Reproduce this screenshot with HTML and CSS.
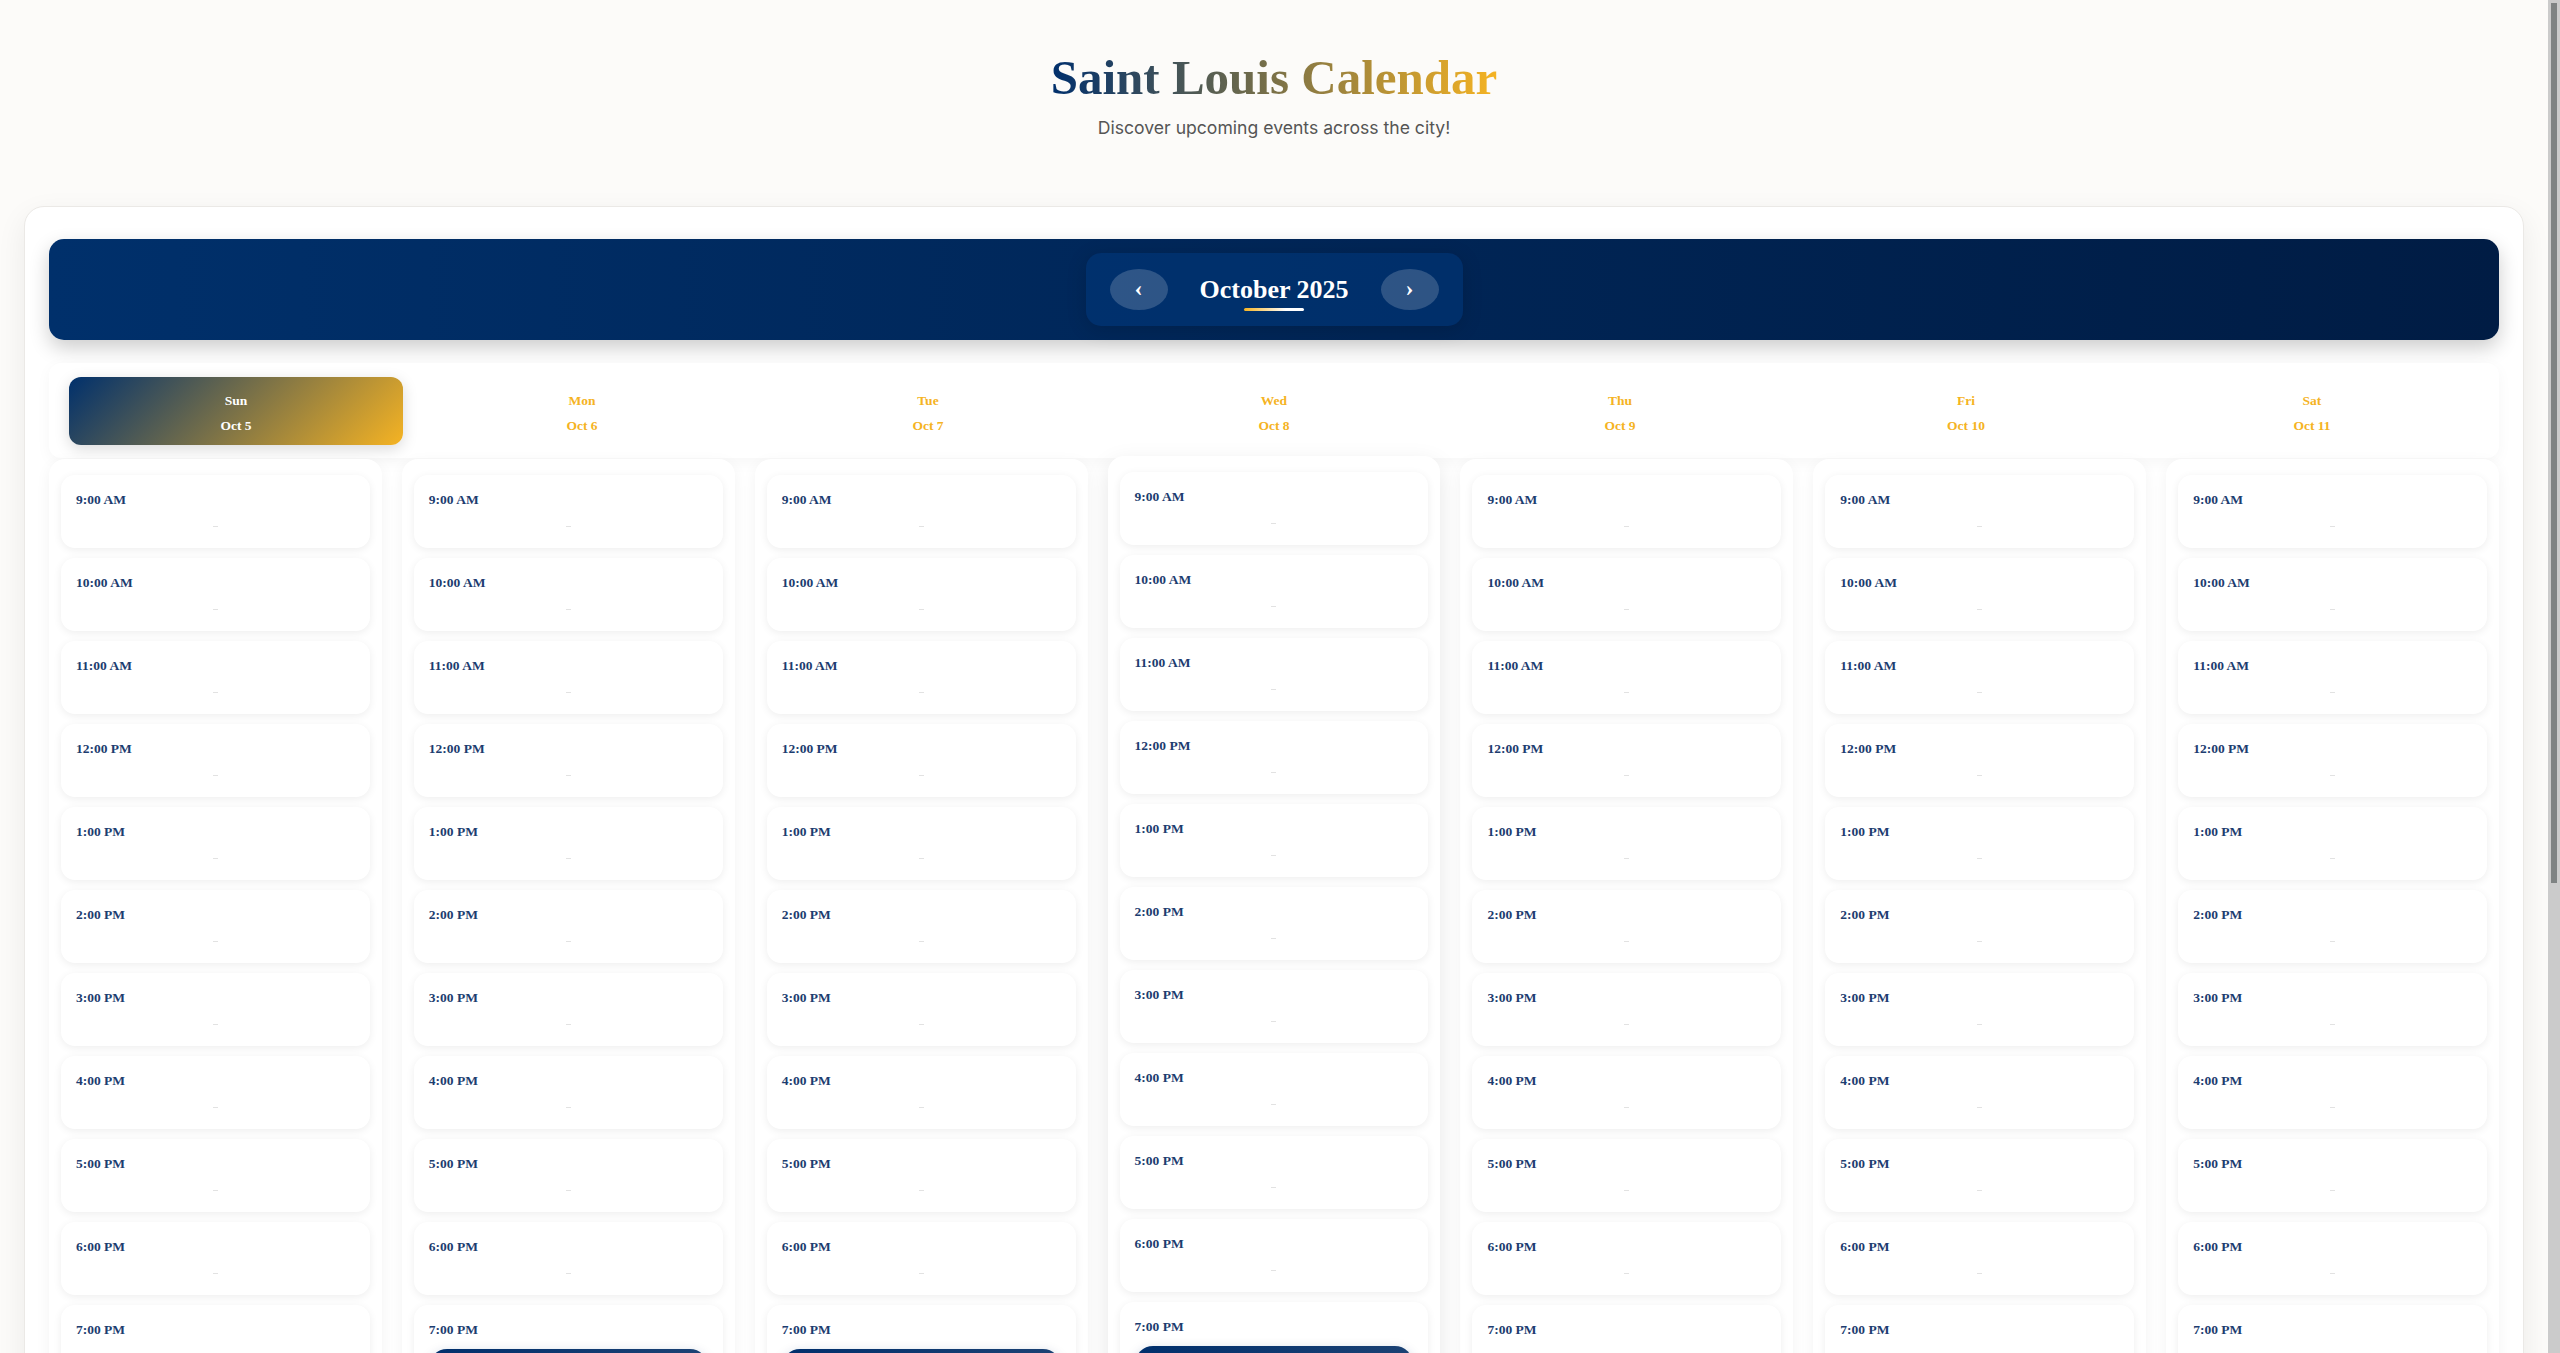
FILE: index.html
```html
<!DOCTYPE html>
<html lang="en">
<head>
<meta charset="utf-8">
<title>Saint Louis Calendar</title>
<link rel="stylesheet" href="styles.css">
</head>
<body>
<header class="page-header">
  <h1 class="page-title">Saint Louis Calendar</h1>
  <p class="page-subtitle">Discover upcoming events across the city!</p>
</header>
<main class="container">
  <section class="calendar-card">
    <div class="month-bar">
      <div class="month-nav">
        <button class="nav-btn" type="button" aria-label="Previous month">‹</button>
        <h2 class="month-title">October 2025</h2>
        <button class="nav-btn" type="button" aria-label="Next month">›</button>
      </div>
    </div>

    <div class="day-header-row">
      <div class="day-head active"><span>Sun</span><span>Oct 5</span></div>
      <div class="day-head"><span>Mon</span><span>Oct 6</span></div>
      <div class="day-head"><span>Tue</span><span>Oct 7</span></div>
      <div class="day-head"><span>Wed</span><span>Oct 8</span></div>
      <div class="day-head"><span>Thu</span><span>Oct 9</span></div>
      <div class="day-head"><span>Fri</span><span>Oct 10</span></div>
      <div class="day-head"><span>Sat</span><span>Oct 11</span></div>
    </div>

    <div class="week-grid">
      <!-- Sunday -->
      <div class="day-col">
        <div class="slot"><div class="slot-time">9:00 AM</div><div class="slot-events"><i class="empty-mark"></i></div></div>
        <div class="slot"><div class="slot-time">10:00 AM</div><div class="slot-events"><i class="empty-mark"></i></div></div>
        <div class="slot"><div class="slot-time">11:00 AM</div><div class="slot-events"><i class="empty-mark"></i></div></div>
        <div class="slot"><div class="slot-time">12:00 PM</div><div class="slot-events"><i class="empty-mark"></i></div></div>
        <div class="slot"><div class="slot-time">1:00 PM</div><div class="slot-events"><i class="empty-mark"></i></div></div>
        <div class="slot"><div class="slot-time">2:00 PM</div><div class="slot-events"><i class="empty-mark"></i></div></div>
        <div class="slot"><div class="slot-time">3:00 PM</div><div class="slot-events"><i class="empty-mark"></i></div></div>
        <div class="slot"><div class="slot-time">4:00 PM</div><div class="slot-events"><i class="empty-mark"></i></div></div>
        <div class="slot"><div class="slot-time">5:00 PM</div><div class="slot-events"><i class="empty-mark"></i></div></div>
        <div class="slot"><div class="slot-time">6:00 PM</div><div class="slot-events"><i class="empty-mark"></i></div></div>
        <div class="slot"><div class="slot-time">7:00 PM</div><div class="slot-events"><i class="empty-mark"></i></div></div>
        <div class="slot"><div class="slot-time">8:00 PM</div><div class="slot-events"><i class="empty-mark"></i></div></div>
        <div class="slot"><div class="slot-time">9:00 PM</div><div class="slot-events"><i class="empty-mark"></i></div></div>
        <div class="slot"><div class="slot-time">10:00 PM</div><div class="slot-events"><i class="empty-mark"></i></div></div>
        <div class="slot"><div class="slot-time">11:00 PM</div><div class="slot-events"><i class="empty-mark"></i></div></div>
      </div>
      <!-- Monday -->
      <div class="day-col">
        <div class="slot"><div class="slot-time">9:00 AM</div><div class="slot-events"><i class="empty-mark"></i></div></div>
        <div class="slot"><div class="slot-time">10:00 AM</div><div class="slot-events"><i class="empty-mark"></i></div></div>
        <div class="slot"><div class="slot-time">11:00 AM</div><div class="slot-events"><i class="empty-mark"></i></div></div>
        <div class="slot"><div class="slot-time">12:00 PM</div><div class="slot-events"><i class="empty-mark"></i></div></div>
        <div class="slot"><div class="slot-time">1:00 PM</div><div class="slot-events"><i class="empty-mark"></i></div></div>
        <div class="slot"><div class="slot-time">2:00 PM</div><div class="slot-events"><i class="empty-mark"></i></div></div>
        <div class="slot"><div class="slot-time">3:00 PM</div><div class="slot-events"><i class="empty-mark"></i></div></div>
        <div class="slot"><div class="slot-time">4:00 PM</div><div class="slot-events"><i class="empty-mark"></i></div></div>
        <div class="slot"><div class="slot-time">5:00 PM</div><div class="slot-events"><i class="empty-mark"></i></div></div>
        <div class="slot"><div class="slot-time">6:00 PM</div><div class="slot-events"><i class="empty-mark"></i></div></div>
        <div class="slot"><div class="slot-time">7:00 PM</div><div class="slot-events">
          <article class="event">
            <div class="event-title">Jazz Night at the Bistro</div>
            <div class="event-meta">7:00 PM – 10:00 PM</div>
            <div class="event-meta">Jazz at the Bistro, Grand Center</div>
            <p class="event-desc">An evening of live jazz in the heart of the Grand Center Arts District, featuring local and touring musicians.</p>
            <span class="event-link">View details</span>
          </article>
        </div></div>
        <div class="slot"><div class="slot-time">8:00 PM</div><div class="slot-events"><i class="empty-mark"></i></div></div>
        <div class="slot"><div class="slot-time">9:00 PM</div><div class="slot-events"><i class="empty-mark"></i></div></div>
        <div class="slot"><div class="slot-time">10:00 PM</div><div class="slot-events"><i class="empty-mark"></i></div></div>
        <div class="slot"><div class="slot-time">11:00 PM</div><div class="slot-events"><i class="empty-mark"></i></div></div>
      </div>
      <!-- Tuesday -->
      <div class="day-col">
        <div class="slot"><div class="slot-time">9:00 AM</div><div class="slot-events"><i class="empty-mark"></i></div></div>
        <div class="slot"><div class="slot-time">10:00 AM</div><div class="slot-events"><i class="empty-mark"></i></div></div>
        <div class="slot"><div class="slot-time">11:00 AM</div><div class="slot-events"><i class="empty-mark"></i></div></div>
        <div class="slot"><div class="slot-time">12:00 PM</div><div class="slot-events"><i class="empty-mark"></i></div></div>
        <div class="slot"><div class="slot-time">1:00 PM</div><div class="slot-events"><i class="empty-mark"></i></div></div>
        <div class="slot"><div class="slot-time">2:00 PM</div><div class="slot-events"><i class="empty-mark"></i></div></div>
        <div class="slot"><div class="slot-time">3:00 PM</div><div class="slot-events"><i class="empty-mark"></i></div></div>
        <div class="slot"><div class="slot-time">4:00 PM</div><div class="slot-events"><i class="empty-mark"></i></div></div>
        <div class="slot"><div class="slot-time">5:00 PM</div><div class="slot-events"><i class="empty-mark"></i></div></div>
        <div class="slot"><div class="slot-time">6:00 PM</div><div class="slot-events"><i class="empty-mark"></i></div></div>
        <div class="slot"><div class="slot-time">7:00 PM</div><div class="slot-events">
          <article class="event">
            <div class="event-title">Trivia Night</div>
            <div class="event-meta">7:00 PM – 9:00 PM</div>
            <div class="event-meta">Schlafly Tap Room, Downtown West</div>
            <p class="event-desc">Grab a team and test your knowledge of St. Louis history, sports and pop culture. Prizes for the top three teams.</p>
            <span class="event-link">View details</span>
          </article>
        </div></div>
        <div class="slot"><div class="slot-time">8:00 PM</div><div class="slot-events"><i class="empty-mark"></i></div></div>
        <div class="slot"><div class="slot-time">9:00 PM</div><div class="slot-events"><i class="empty-mark"></i></div></div>
        <div class="slot"><div class="slot-time">10:00 PM</div><div class="slot-events"><i class="empty-mark"></i></div></div>
        <div class="slot"><div class="slot-time">11:00 PM</div><div class="slot-events"><i class="empty-mark"></i></div></div>
      </div>
      <!-- Wednesday -->
      <div class="day-col lifted">
        <div class="slot"><div class="slot-time">9:00 AM</div><div class="slot-events"><i class="empty-mark"></i></div></div>
        <div class="slot"><div class="slot-time">10:00 AM</div><div class="slot-events"><i class="empty-mark"></i></div></div>
        <div class="slot"><div class="slot-time">11:00 AM</div><div class="slot-events"><i class="empty-mark"></i></div></div>
        <div class="slot"><div class="slot-time">12:00 PM</div><div class="slot-events"><i class="empty-mark"></i></div></div>
        <div class="slot"><div class="slot-time">1:00 PM</div><div class="slot-events"><i class="empty-mark"></i></div></div>
        <div class="slot"><div class="slot-time">2:00 PM</div><div class="slot-events"><i class="empty-mark"></i></div></div>
        <div class="slot"><div class="slot-time">3:00 PM</div><div class="slot-events"><i class="empty-mark"></i></div></div>
        <div class="slot"><div class="slot-time">4:00 PM</div><div class="slot-events"><i class="empty-mark"></i></div></div>
        <div class="slot"><div class="slot-time">5:00 PM</div><div class="slot-events"><i class="empty-mark"></i></div></div>
        <div class="slot"><div class="slot-time">6:00 PM</div><div class="slot-events"><i class="empty-mark"></i></div></div>
        <div class="slot"><div class="slot-time">7:00 PM</div><div class="slot-events">
          <article class="event">
            <div class="event-title">Blues on the Riverfront</div>
            <div class="event-meta">7:00 PM – 11:00 PM</div>
            <div class="event-meta">BB's Jazz, Blues &amp; Soups</div>
            <p class="event-desc">Live blues from some of the city's favorite bands, just steps from the Gateway Arch and the Mississippi riverfront.</p>
            <span class="event-link">View details</span>
          </article>
        </div></div>
        <div class="slot"><div class="slot-time">8:00 PM</div><div class="slot-events"><i class="empty-mark"></i></div></div>
        <div class="slot"><div class="slot-time">9:00 PM</div><div class="slot-events"><i class="empty-mark"></i></div></div>
        <div class="slot"><div class="slot-time">10:00 PM</div><div class="slot-events"><i class="empty-mark"></i></div></div>
        <div class="slot"><div class="slot-time">11:00 PM</div><div class="slot-events"><i class="empty-mark"></i></div></div>
      </div>
      <!-- Thursday -->
      <div class="day-col">
        <div class="slot"><div class="slot-time">9:00 AM</div><div class="slot-events"><i class="empty-mark"></i></div></div>
        <div class="slot"><div class="slot-time">10:00 AM</div><div class="slot-events"><i class="empty-mark"></i></div></div>
        <div class="slot"><div class="slot-time">11:00 AM</div><div class="slot-events"><i class="empty-mark"></i></div></div>
        <div class="slot"><div class="slot-time">12:00 PM</div><div class="slot-events"><i class="empty-mark"></i></div></div>
        <div class="slot"><div class="slot-time">1:00 PM</div><div class="slot-events"><i class="empty-mark"></i></div></div>
        <div class="slot"><div class="slot-time">2:00 PM</div><div class="slot-events"><i class="empty-mark"></i></div></div>
        <div class="slot"><div class="slot-time">3:00 PM</div><div class="slot-events"><i class="empty-mark"></i></div></div>
        <div class="slot"><div class="slot-time">4:00 PM</div><div class="slot-events"><i class="empty-mark"></i></div></div>
        <div class="slot"><div class="slot-time">5:00 PM</div><div class="slot-events"><i class="empty-mark"></i></div></div>
        <div class="slot"><div class="slot-time">6:00 PM</div><div class="slot-events"><i class="empty-mark"></i></div></div>
        <div class="slot"><div class="slot-time">7:00 PM</div><div class="slot-events"><i class="empty-mark"></i></div></div>
        <div class="slot"><div class="slot-time">8:00 PM</div><div class="slot-events"><i class="empty-mark"></i></div></div>
        <div class="slot"><div class="slot-time">9:00 PM</div><div class="slot-events"><i class="empty-mark"></i></div></div>
        <div class="slot"><div class="slot-time">10:00 PM</div><div class="slot-events"><i class="empty-mark"></i></div></div>
        <div class="slot"><div class="slot-time">11:00 PM</div><div class="slot-events"><i class="empty-mark"></i></div></div>
      </div>
      <!-- Friday -->
      <div class="day-col">
        <div class="slot"><div class="slot-time">9:00 AM</div><div class="slot-events"><i class="empty-mark"></i></div></div>
        <div class="slot"><div class="slot-time">10:00 AM</div><div class="slot-events"><i class="empty-mark"></i></div></div>
        <div class="slot"><div class="slot-time">11:00 AM</div><div class="slot-events"><i class="empty-mark"></i></div></div>
        <div class="slot"><div class="slot-time">12:00 PM</div><div class="slot-events"><i class="empty-mark"></i></div></div>
        <div class="slot"><div class="slot-time">1:00 PM</div><div class="slot-events"><i class="empty-mark"></i></div></div>
        <div class="slot"><div class="slot-time">2:00 PM</div><div class="slot-events"><i class="empty-mark"></i></div></div>
        <div class="slot"><div class="slot-time">3:00 PM</div><div class="slot-events"><i class="empty-mark"></i></div></div>
        <div class="slot"><div class="slot-time">4:00 PM</div><div class="slot-events"><i class="empty-mark"></i></div></div>
        <div class="slot"><div class="slot-time">5:00 PM</div><div class="slot-events"><i class="empty-mark"></i></div></div>
        <div class="slot"><div class="slot-time">6:00 PM</div><div class="slot-events"><i class="empty-mark"></i></div></div>
        <div class="slot"><div class="slot-time">7:00 PM</div><div class="slot-events"><i class="empty-mark"></i></div></div>
        <div class="slot"><div class="slot-time">8:00 PM</div><div class="slot-events"><i class="empty-mark"></i></div></div>
        <div class="slot"><div class="slot-time">9:00 PM</div><div class="slot-events"><i class="empty-mark"></i></div></div>
        <div class="slot"><div class="slot-time">10:00 PM</div><div class="slot-events"><i class="empty-mark"></i></div></div>
        <div class="slot"><div class="slot-time">11:00 PM</div><div class="slot-events"><i class="empty-mark"></i></div></div>
      </div>
      <!-- Saturday -->
      <div class="day-col">
        <div class="slot"><div class="slot-time">9:00 AM</div><div class="slot-events"><i class="empty-mark"></i></div></div>
        <div class="slot"><div class="slot-time">10:00 AM</div><div class="slot-events"><i class="empty-mark"></i></div></div>
        <div class="slot"><div class="slot-time">11:00 AM</div><div class="slot-events"><i class="empty-mark"></i></div></div>
        <div class="slot"><div class="slot-time">12:00 PM</div><div class="slot-events"><i class="empty-mark"></i></div></div>
        <div class="slot"><div class="slot-time">1:00 PM</div><div class="slot-events"><i class="empty-mark"></i></div></div>
        <div class="slot"><div class="slot-time">2:00 PM</div><div class="slot-events"><i class="empty-mark"></i></div></div>
        <div class="slot"><div class="slot-time">3:00 PM</div><div class="slot-events"><i class="empty-mark"></i></div></div>
        <div class="slot"><div class="slot-time">4:00 PM</div><div class="slot-events"><i class="empty-mark"></i></div></div>
        <div class="slot"><div class="slot-time">5:00 PM</div><div class="slot-events"><i class="empty-mark"></i></div></div>
        <div class="slot"><div class="slot-time">6:00 PM</div><div class="slot-events"><i class="empty-mark"></i></div></div>
        <div class="slot"><div class="slot-time">7:00 PM</div><div class="slot-events"><i class="empty-mark"></i></div></div>
        <div class="slot"><div class="slot-time">8:00 PM</div><div class="slot-events"><i class="empty-mark"></i></div></div>
        <div class="slot"><div class="slot-time">9:00 PM</div><div class="slot-events"><i class="empty-mark"></i></div></div>
        <div class="slot"><div class="slot-time">10:00 PM</div><div class="slot-events"><i class="empty-mark"></i></div></div>
        <div class="slot"><div class="slot-time">11:00 PM</div><div class="slot-events"><i class="empty-mark"></i></div></div>
      </div>
    </div>
  </section>
</main>
</body>
</html>
```

FILE: styles.css
```css
* { box-sizing: border-box; }

/* The page reserves a 12px scrollbar gutter on the right, as in the reference. */
html {
  background-color: #fcfbf9;
  background-image:
    linear-gradient(#7f8383, #7f8383),
    linear-gradient(#cbcbcb, #cbcbcb);
  background-size: 6px 880px, 12px 100%;
  background-position: right 3px top 3px, right top;
  background-repeat: no-repeat;
}

body {
  margin: 0 12px 0 0;
  font-family: "Inter", "Liberation Sans", sans-serif;
  color: #333;
}

/* ---------- Page header ---------- */
.page-header {
  text-align: center;
  padding: 49px 24px 65px;
}

.page-title {
  display: block;
  width: fit-content;
  margin: 0 auto;
  font-family: "Liberation Serif", "DejaVu Serif", serif;
  font-weight: 700;
  font-size: 49px;
  line-height: 1.2;
  background: linear-gradient(90deg, #002f6c 0%, #f5b323 100%);
  -webkit-background-clip: text;
  background-clip: text;
  color: transparent;
}

.page-subtitle {
  margin: 7px 0 0;
  font-size: 17.6px;
  line-height: 1.5;
  color: #555;
}

/* ---------- Calendar card ---------- */
.container { padding: 0 24px 48px; }

.calendar-card {
  background: #fff;
  border: 1px solid #ebe9e6;
  border-radius: 20px;
  padding: 32px 24px 24px;
  box-shadow: 0 10px 30px rgba(0, 0, 0, 0.07);
}

.month-bar {
  display: flex;
  justify-content: center;
  padding: 14px;
  border-radius: 15px;
  background: linear-gradient(90deg, #00306b 0%, #001c44 100%);
  box-shadow: 0 8px 20px rgba(0, 0, 0, 0.2);
}

.month-nav {
  display: flex;
  align-items: center;
  gap: 32px;
  padding: 16px 24px;
  border-radius: 15px;
  background: rgba(0, 58, 128, 0.5);
  box-shadow: 0 4px 20px rgba(0, 0, 0, 0.15);
}

.nav-btn {
  display: flex;
  align-items: center;
  justify-content: center;
  width: 58px;
  height: 41px;
  padding: 0 0 3px;
  border: 0;
  border-radius: 50%;
  background: rgba(255, 255, 255, 0.18);
  color: #fff;
  font-family: "Liberation Serif", "DejaVu Serif", serif;
  font-weight: 700;
  font-size: 24px;
  line-height: 1;
}

.month-title {
  position: relative;
  margin: 0;
  color: #fff;
  font-family: "Liberation Serif", "DejaVu Serif", serif;
  font-weight: 700;
  font-size: 26px;
  line-height: 1.3;
}

.month-title::after {
  content: "";
  position: absolute;
  left: 50%;
  bottom: -4px;
  width: 60px;
  height: 3px;
  margin-left: -30px;
  border-radius: 2px;
  background: linear-gradient(90deg, #f5b323 0%, #ffffff 70%);
}

/* ---------- Day header row ---------- */
.day-header-row {
  display: grid;
  grid-template-columns: repeat(7, 1fr);
  gap: 12px;
  margin-top: 23px;
  padding: 14px 20px 13px;
  background: #fff;
  border-radius: 12px;
  box-shadow: 0 4px 15px rgba(0, 0, 0, 0.04);
}

.day-head {
  display: flex;
  flex-direction: column;
  align-items: center;
  padding: 11px 0 7px;
  border-radius: 12px;
  color: #f5b323;
  font-family: "Liberation Serif", "DejaVu Serif", serif;
  font-weight: 700;
  font-size: 13.5px;
  line-height: 25px;
}

.day-head.active {
  background: linear-gradient(135deg, #00306c 0%, #f5b323 100%);
  color: #fff;
  box-shadow: 0 4px 15px rgba(0, 0, 0, 0.15);
}

/* ---------- Week grid ---------- */
.week-grid {
  display: grid;
  grid-template-columns: repeat(7, 1fr);
  gap: 20px;
  margin-top: 1px;
}

.day-col {
  display: flex;
  flex-direction: column;
  gap: 10px;
  padding: 16px 12px;
  background: #fff;
  border-radius: 16px;
  box-shadow: 0 4px 15px rgba(0, 0, 0, 0.05);
}

.day-col.lifted {
  transform: translateY(-3px);
  box-shadow: 0 8px 24px rgba(0, 0, 0, 0.1);
}

.slot {
  padding: 14px 15px;
  background: #fff;
  border-radius: 14px;
  box-shadow: 0 2px 8px rgba(0, 0, 0, 0.07);
}

.slot-time {
  font-family: "Liberation Serif", "DejaVu Serif", serif;
  font-weight: 700;
  font-size: 13.5px;
  line-height: 21px;
  color: #1d3d70;
}

.slot-events {
  display: flex;
  flex-direction: column;
  align-items: center;
  justify-content: center;
  min-height: 15px;
  margin-top: 9px;
}

.empty-mark {
  display: block;
  width: 5px;
  height: 1px;
  background: #e2e2e2;
}

.event {
  align-self: stretch;
  display: flex;
  flex-direction: column;
  gap: 6px;
  padding: 16px 18px;
  border-radius: 18px;
  background: linear-gradient(135deg, #002f6c 0%, #30507a 100%);
  color: #fff;
  box-shadow: 0 4px 12px rgba(0, 47, 108, 0.25);
}

.event-title {
  font-family: "Liberation Serif", "DejaVu Serif", serif;
  font-weight: 700;
  font-size: 16px;
  line-height: 20px;
}

.event-meta {
  font-size: 12.5px;
  line-height: 18px;
  color: rgba(255, 255, 255, 0.85);
}

.event-desc {
  margin: 0;
  font-size: 12.5px;
  line-height: 18px;
  color: rgba(255, 255, 255, 0.75);
}

.event-link {
  align-self: flex-start;
  margin-top: 4px;
  padding: 6px 14px;
  border-radius: 999px;
  background: #f5b323;
  color: #002f6c;
  font-size: 12px;
  font-weight: 600;
  line-height: 18px;
}
```
